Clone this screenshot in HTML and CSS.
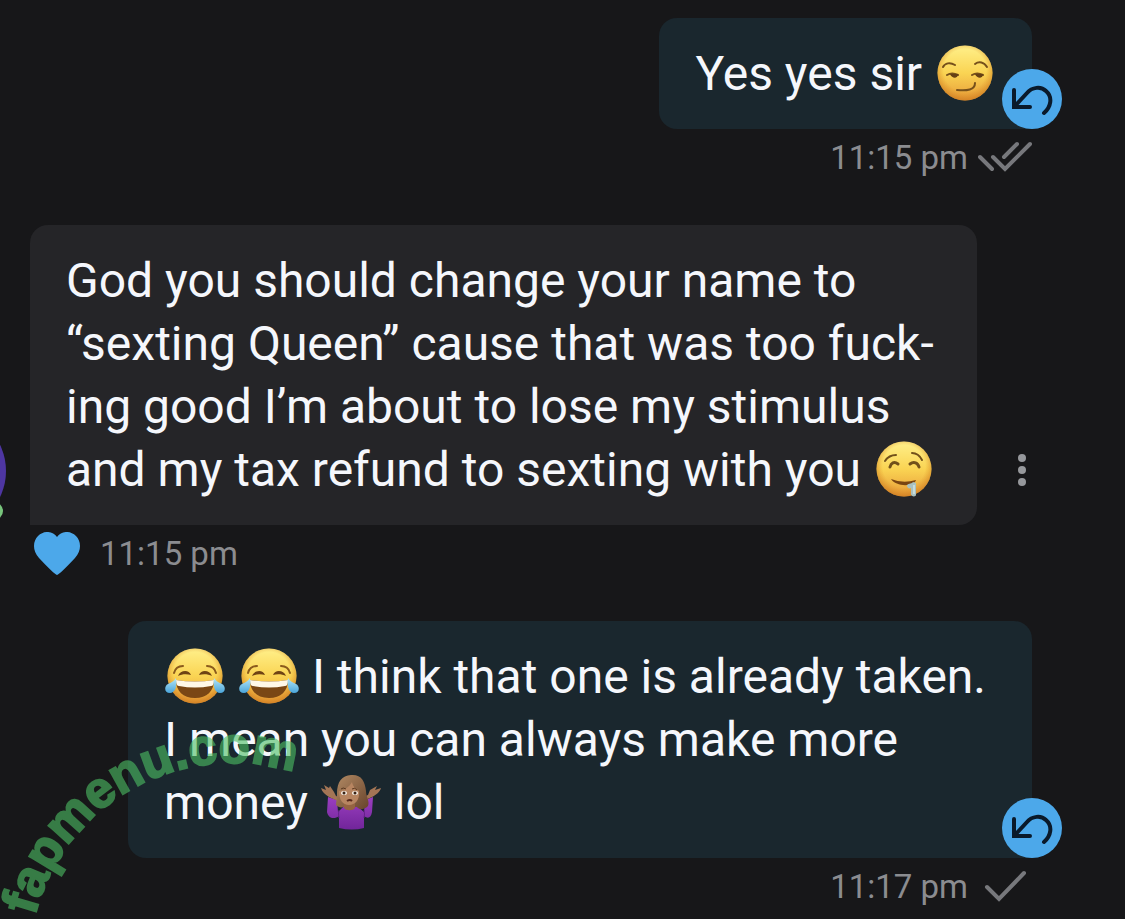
FILE: index.html
```html
<!DOCTYPE html>
<html lang="en">

<head>
    <meta charset="UTF-8">
    <meta name="viewport" content="width=device-width, initial-scale=1">
    <title>Messages</title>
    <link rel="stylesheet" href="styles.css">
</head>

<body>
    <!-- shared shapes -->
    <svg class="sprite" aria-hidden="true">
        <defs>
            <linearGradient id="skin" x1="0" y1="0" x2="0" y2="1">
                <stop offset="0" stop-color="#fff08a" />
                <stop offset="0.5" stop-color="#fad453" />
                <stop offset="1" stop-color="#e79b38" />
            </linearGradient>
            <radialGradient id="shade" cx="0.5" cy="0.45" r="0.55">
                <stop offset="0.7" stop-color="#d98620" stop-opacity="0" />
                <stop offset="1" stop-color="#c9761c" stop-opacity="0.65" />
            </radialGradient>
            <linearGradient id="tear" x1="0" y1="0" x2="0" y2="1">
                <stop offset="0" stop-color="#b4e6f8" />
                <stop offset="1" stop-color="#4aa5da" />
            </linearGradient>
            <linearGradient id="hair" x1="0" y1="0" x2="1" y2="1">
                <stop offset="0" stop-color="#b28a64" />
                <stop offset="1" stop-color="#67432b" />
            </linearGradient>
            <linearGradient id="shirt" x1="0" y1="0" x2="0" y2="1">
                <stop offset="0" stop-color="#9b3fc0" />
                <stop offset="1" stop-color="#71259a" />
            </linearGradient>
        </defs>
        <symbol id="face" viewBox="0 0 60 60">
            <circle cx="30" cy="30" r="27.5" fill="url(#skin)" />
            <circle cx="30" cy="30" r="27.5" fill="url(#shade)" />
        </symbol>
        <symbol id="joy" viewBox="0 0 60 60">
            <use href="#face" />
            <g fill="none" stroke="#8a5a1c" stroke-linecap="round" stroke-width="2">
                <path d="M9 27c1-4 4-7 9-7M51 27c-1-4-4-7-9-7" />
            </g>
            <path d="M13 30c2-6 11-7 13-1-4-1-9-1-13 1zM47 30c-2-6-11-7-13-1 4-1 9-1 13 1z" fill="#6f4314" />
            <path d="M11 34q19 3 38 0c0 11-7 18-19 18S11 45 11 34z" fill="#7a4715" />
            <path d="M11 34q19 3 38 0c0 4-1 6-3 6q-16 3-32 0c-2 0-3-2-3-6z" fill="#fff8e8" />
            <path d="M11 32c1 7 0 15-6 15-6 0-6-7-2-9 4-2 6-3 8-6zM49 32c-1 7 0 15 6 15 6 0 6-7 2-9-4-2-6-3-8-6z" fill="url(#tear)" />
        </symbol>
        <symbol id="smirk" viewBox="0 0 60 60">
            <use href="#face" />
            <g fill="none" stroke="#76501b" stroke-linecap="round" stroke-linejoin="round" stroke-width="2">
                <path d="M8 24c2-4 7-5 12-2M40 21c4-3 9-2 12 3" />
                <path d="M12 32q5-3 11 0M37 32q5-3 11 0" />
                <path d="M22 47c10 1 18 0 18-7" />
            </g>
            <path d="M15 31h8c0 5-6 5-8 0zM40 31h8c0 5-6 5-8 0z" fill="#654014" />
        </symbol>
        <symbol id="drool" viewBox="0 0 60 60">
            <use href="#face" />
            <g fill="none" stroke="#71501a" stroke-linecap="round">
                <path d="M11 22c2-3 6-6 11-6M38 14c4 0 8 3 10 7" stroke-width="2" />
                <path d="M16 28c1-4 4-6 8-3M36 25c4-3 8-1 9 3" stroke-width="3" />
            </g>
            <path d="M17 40q12 5 25 1c-2 7-20 7-25-1z" fill="#794512" />
            <path d="M33 46c2-2 5-1 6-3l3 1v12c0 2-5 2-5-1v-6c-2 1-4 0-4-3z" fill="#a9c1c0" />
            <path d="M40 46v9" stroke="#e5f4f4" stroke-width="1" />
        </symbol>
        <symbol id="shrug" viewBox="0 0 60 60">
            <path d="M7 25l9 3 1 12 6-6h13l7 6 1-12 8-3-1 15c-1 6-4 7-8 4v12q-12 3-25 0V44c-5 4-11 2-12-4z" fill="url(#shirt)" />
            <path d="M18 46q-1-4 0-8M43 46q1-4 0-8" stroke="#64208a" fill="none" />
            <path d="M8 25c-4-3-7-5-8-9l5 2-2-5 5 3 1-2 4 6 2 4c2 0 2 3 2 5zM51 25c4-2 8-5 9-9l-6 2 2-4-7 4-2 5c-2 0-3 3-3 5z" fill="#a37555" />
            <path d="M15 33c0-3 1-6 1-11C16 9 21 4 30 3c10-1 14 6 15 16 0 6 4 10 2 15-4 4-9 4-11 1H22c-2 1-5 0-7-2z" fill="url(#hair)" />
            <path d="M23 30h11v6c-2 3-9 3-11 0z" fill="#956341" />
            <path d="M18 19c6-1 10-4 13-9 1 5 4 7 7 9 1 9-4 14-10 14s-10-5-10-14z" fill="#b78561" />
            <path d="M20 17q2-2 5 0M31 17q3-2 5 1" stroke="#59371f" stroke-width="1" fill="none" />
            <ellipse cx="23" cy="21" rx="3" ry="2" fill="#f7eee4" />
            <ellipse cx="34" cy="21" rx="3" ry="2" fill="#f7eee4" />
            <circle cx="23" cy="21" r="1.5" fill="#3a2315" />
            <circle cx="34" cy="21" r="1.5" fill="#3a2315" />
            <path d="M26 29q3-2 5 0" stroke="#57291c" stroke-width="2" fill="none" />
        </symbol>
        <symbol id="undo" viewBox="0 0 60 60">
            <path d="M12 21v17h16M13 37l12-13c5-6 14-7 19-2 7 6 5 16-2 22" fill="none" stroke="#0a1a2b" stroke-width="4" stroke-linecap="round" stroke-linejoin="miter" />
        </symbol>
    </svg>

    <main class="chat">
        <section class="message sent">
            <div class="bubble">
                <p>Yes yes sir <svg class="emoji" role="img" aria-label="smirking face"><use href="#smirk" /></svg></p>
                <button class="undo" type="button" aria-label="Unsend"><svg><use href="#undo" /></svg></button>
            </div>
            <div class="meta">
                <time>11:15 pm</time>
                <svg class="ticks" viewBox="0 0 54 32" role="img" aria-label="Read">
                    <path d="M2 16l12 12M15 16l12 12L52 3M26 16L39 3" />
                </svg>
            </div>
        </section>

        <section class="message received">
            <div class="avatar"></div>
            <div class="row">
                <div class="bubble">
                    <p>God you should change your name to<br>
                        “sexting Queen” cause that was too fuck-<br>
                        ing good I’m about to lose my stimulus<br>
                        and my tax refund to sexting with you <svg class="emoji" role="img" aria-label="drooling face"><use href="#drool" /></svg></p>
                </div>
                <button class="more" type="button" aria-label="More options">
                    <svg viewBox="0 0 8 32">
                        <circle cx="4" cy="4" r="4" />
                        <circle cx="4" cy="16" r="4" />
                        <circle cx="4" cy="28" r="4" />
                    </svg>
                </button>
            </div>
            <div class="meta">
                <button class="like" type="button" aria-label="Liked">
                    <svg viewBox="0 0 46 43">
                        <path d="M23 43Q20 42 5 26C-2 18-1 9 4 4 10-2 19-1 23 5 27-1 36-2 42 4c5 5 6 14-1 22Q26 42 23 43z" />
                    </svg>
                </button>
                <time>11:15 pm</time>
            </div>
        </section>

        <section class="message sent">
            <div class="bubble long">
                <p><svg class="emoji" role="img" aria-label="tears of joy"><use href="#joy" /></svg> <svg class="emoji" role="img" aria-label="tears of joy"><use href="#joy" /></svg> I think that one is already taken.<br>
                    I mean you can always make more<br>
                    money <svg class="emoji" role="img" aria-label="woman shrugging"><use href="#shrug" /></svg> lol</p>
                <button class="undo" type="button" aria-label="Unsend"><svg><use href="#undo" /></svg></button>
            </div>
            <div class="meta">
                <time>11:17 pm</time>
                <svg class="ticks" viewBox="0 0 54 32" role="img" aria-label="Sent">
                    <path d="M9 17l12 12L46 3" />
                </svg>
            </div>
        </section>
    </main>

    <svg class="watermark" viewBox="0 0 320 200">
        <path id="arc" d="M35 197A203 203 0 0 1 320 64" fill="none" />
        <text><textPath href="#arc">fapmenu.com</textPath></text>
    </svg>
</body>

</html>
```

FILE: styles.css
```css
* {
    box-sizing: border-box;
}

body {
    margin: 0;
    min-height: 100vh;
    position: relative;
    overflow: hidden;
    background-color: #171719;
    color: #f5f7fc;
    font-family: Roboto, sans-serif;
}

p {
    margin: 0;
}

button {
    padding: 0;
    border: 0;
    background: none;
    cursor: pointer;
}

svg {
    display: block;
}

.sprite {
    position: absolute;
    width: 0;
    height: 0;
}

.chat {
    display: flex;
    flex-direction: column;
    gap: 40px;
    padding: 18px 93px 0 30px;
}

.message {
    position: relative;
    display: flex;
    flex-direction: column;
    align-items: flex-start;
}

.message.sent {
    align-items: flex-end;
}

.row {
    display: flex;
    align-items: flex-end;
    gap: 41px;
}

.bubble {
    position: relative;
    padding: 24px 36px;
    border-radius: 18px;
    font-size: 48px;
    line-height: 63px;
    white-space: nowrap;
}

.sent .bubble {
    background-color: #1a272e;
    border-bottom-right-radius: 0;
}

.sent .long {
    padding-right: 46px;
}

.received .bubble {
    padding-right: 42px;
    background-color: #252528;
    border-bottom-left-radius: 0;
}

.emoji {
    display: inline-block;
    width: 60px;
    height: 60px;
    margin: 0 1px;
    vertical-align: -13px;
}

/* sits on the bubble's corner */
.undo {
    position: absolute;
    right: -30px;
    bottom: 0;
    width: 60px;
    height: 60px;
    border-radius: 50%;
    background-color: #4ca8ea;
}

.undo svg {
    width: 60px;
    height: 60px;
}

.more {
    margin-bottom: 39px;
}

.more svg {
    width: 8px;
    height: 32px;
    fill: #96989c;
}

.meta {
    display: flex;
    align-items: center;
    gap: 10px;
    height: 56px;
    color: #8b8c90;
    font-size: 33px;
}

.received .meta {
    gap: 20px;
    padding-left: 4px;
}

.ticks {
    width: 54px;
    height: 32px;
    fill: none;
    stroke: #77787c;
    stroke-width: 4;
    stroke-linecap: round;
}

.like svg {
    width: 46px;
    height: 43px;
    fill: #4ca8ea;
}

/* mostly off the left edge */
.avatar {
    position: absolute;
    left: -144px;
    bottom: 50px;
    width: 120px;
    height: 120px;
    border-radius: 50%;
    background-color: #4e36a2;
}

.avatar::after {
    content: "";
    position: absolute;
    right: 3px;
    bottom: 11px;
    width: 18px;
    height: 18px;
    border-radius: 50%;
    background-color: #78c47c;
}

.watermark {
    position: absolute;
    left: 0;
    bottom: 0;
    width: 320px;
    height: 200px;
    opacity: 0.6;
    fill: #4dc064;
    stroke: #4dc064;
    stroke-width: 2;
    font: bold 51px "Liberation Sans", Arial, sans-serif;
    pointer-events: none;
}

.watermark path {
    stroke: none;
}
```
